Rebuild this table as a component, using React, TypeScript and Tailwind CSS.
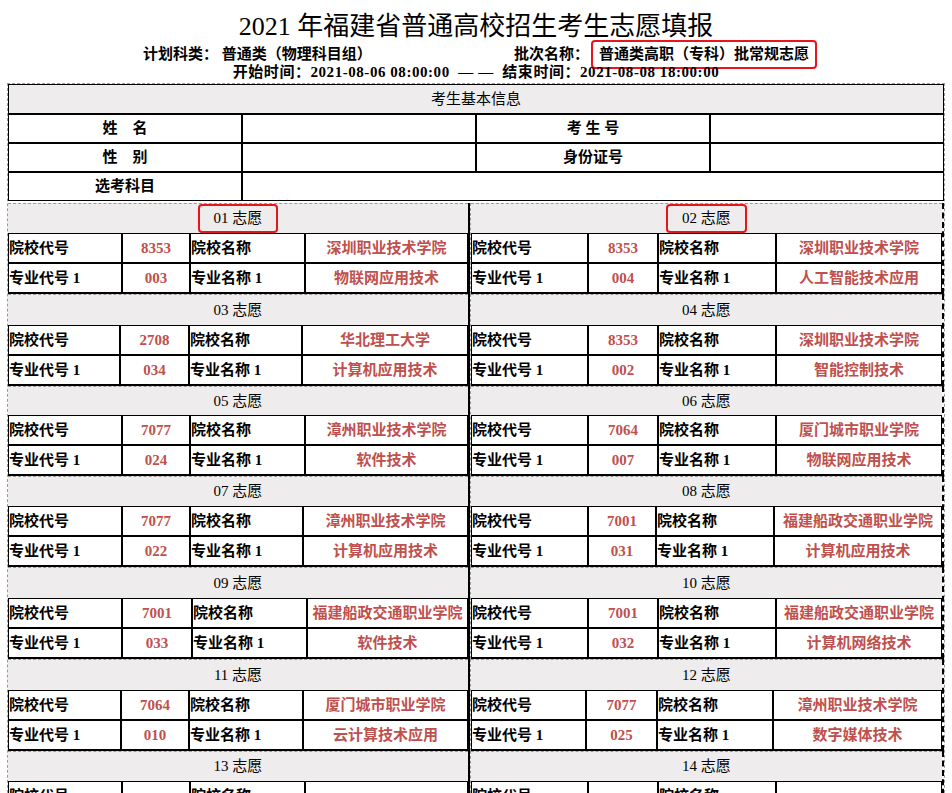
import React from "react";

type V = {
  n: string;
  code?: string;
  school?: string;
  mcode?: string;
  major?: string;
  w?: [number, number, number];
  hl?: boolean;
};

const pairs: { h: string; l: V; r: V }[] = [
  {
    h: "h-[30px]",
    l: { n: "01", code: "8353", school: "深圳职业技术学院", mcode: "003", major: "物联网应用技术", hl: true },
    r: { n: "02", code: "8353", school: "深圳职业技术学院", mcode: "004", major: "人工智能技术应用", hl: true },
  },
  {
    h: "h-[31px]",
    l: { n: "03", code: "2708", school: "华北理工大学", mcode: "034", major: "计算机应用技术", w: [112, 69, 113] },
    r: { n: "04", code: "8353", school: "深圳职业技术学院", mcode: "002", major: "智能控制技术" },
  },
  {
    h: "h-[29px]",
    l: { n: "05", code: "7077", school: "漳州职业技术学院", mcode: "024", major: "软件技术" },
    r: { n: "06", code: "7064", school: "厦门城市职业学院", mcode: "007", major: "物联网应用技术" },
  },
  {
    h: "h-[30px]",
    l: { n: "07", code: "7077", school: "漳州职业技术学院", mcode: "022", major: "计算机应用技术", w: [114, 68, 113] },
    r: { n: "08", code: "7001", school: "福建船政交通职业学院", mcode: "031", major: "计算机应用技术", w: [117, 68, 118] },
  },
  {
    h: "h-[31px]",
    l: { n: "09", code: "7001", school: "福建船政交通职业学院", mcode: "033", major: "软件技术", w: [114, 70, 115] },
    r: { n: "10", code: "7001", school: "福建船政交通职业学院", mcode: "032", major: "计算机网络技术" },
  },
  {
    h: "h-[31px]",
    l: { n: "11", code: "7064", school: "厦门城市职业学院", mcode: "010", major: "云计算技术应用", w: [113, 68, 114] },
    r: { n: "12", code: "7077", school: "漳州职业技术学院", mcode: "025", major: "数字媒体技术", w: [115, 71, 116] },
  },
  {
    h: "h-[30px]",
    l: { n: "13" },
    r: { n: "14" },
  },
];

function Row({ w, a, b, c, d }: { w: [number, number, number]; a: string; b?: string; c: string; d?: string }) {
  return (
    <div className="flex h-[30px]">
      <div className="border border-black flex items-center font-bold text-[15px] shrink-0 whitespace-nowrap" style={{ width: w[0] }}>
        {a}
      </div>
      <div className="border border-black flex items-center justify-center font-bold text-[15px] text-[#c0504d] shrink-0" style={{ width: w[1] }}>
        {b}
      </div>
      <div className="border border-black flex items-center font-bold text-[15px] shrink-0 whitespace-nowrap" style={{ width: w[2] }}>
        {c}
      </div>
      <div className="border border-black flex-1 flex items-center justify-center font-bold text-[15px] text-[#c0504d] whitespace-nowrap">
        {d}
      </div>
    </div>
  );
}

function Block({ v, side, h }: { v: V; side: "l" | "r"; h: string }) {
  const w: [number, number, number] = v.w ?? (side === "l" ? [114, 68, 115] : [117, 70, 118]);
  return (
    <div className="flex flex-col border-b border-black">
      <div className={`${h} flex items-center justify-center bg-[#eeecec] border-t border-dashed border-[#9a9a9a] text-[15px]`}>
        {v.hl ? (
          <span className="h-[29px] px-[14px] flex items-center border-2 border-[#e8151d] rounded-[4px]">
            {v.n} 志愿
          </span>
        ) : (
          <span>{v.n} 志愿</span>
        )}
      </div>
      <Row w={w} a="院校代号" b={v.code} c="院校名称" d={v.school} />
      <Row w={w} a="专业代号 1" b={v.mcode} c="专业名称 1" d={v.major} />
    </div>
  );
}

export default function App() {
  return (
    <div className="w-[952px] bg-white text-black font-['Liberation_Serif','Noto_Sans_CJK_SC',serif] pt-[7px] pb-[40px]">
      <div className="h-[39px] leading-[40px] text-[26px] text-center">2021 年福建省普通高校招生考生志愿填报</div>
      <div className="h-[16px] flex items-center text-[15px] font-bold pl-[143px]">
        <span className="w-[371px] shrink-0 whitespace-nowrap">计划科类：&nbsp;普通类（物理科目组）</span>
        <span className="whitespace-nowrap">批次名称：</span>
        <span className="ml-[2px] h-[29px] px-[6px] flex items-center border-2 border-[#e8151d] rounded-[4px] whitespace-nowrap">
          普通类高职（专科）批常规志愿
        </span>
      </div>
      <div className="h-[20px] flex items-center justify-center text-[15px] font-bold whitespace-nowrap tracking-[0.55px]">
        开始时间：2021-08-06 08:00:00 &nbsp;— —&nbsp; 结束时间：2021-08-08 18:00:00
      </div>

      <div className="mt-[1px] ml-[7px] w-[938px] border border-dashed border-[#9a9a9a]">
        <div className="h-[30px] border border-black bg-[#eeecec] flex items-center justify-center text-[15px]">
          考生基本信息
        </div>
        <div className="flex h-[29px] text-[15px] font-bold">
          <div className="w-[234px] border border-black flex items-center justify-center">姓&nbsp;&nbsp;&nbsp;&nbsp;名</div>
          <div className="w-[234px] border border-black"></div>
          <div className="w-[234px] border border-black flex items-center justify-center">考&nbsp;生&nbsp;号</div>
          <div className="flex-1 border border-black"></div>
        </div>
        <div className="flex h-[29px] text-[15px] font-bold">
          <div className="w-[234px] border border-black flex items-center justify-center">性&nbsp;&nbsp;&nbsp;&nbsp;别</div>
          <div className="w-[234px] border border-black"></div>
          <div className="w-[234px] border border-black flex items-center justify-center">身份证号</div>
          <div className="flex-1 border border-black"></div>
        </div>
        <div className="flex h-[29px] text-[15px] font-bold">
          <div className="w-[234px] border border-black flex items-center justify-center">选考科目</div>
          <div className="flex-1 border border-black"></div>
        </div>

        <div className="mt-[2px] flex flex-col">
          {pairs.map((p) => (
            <div key={p.l.n} className="flex">
              <div className="w-[462px] shrink-0 border-r-2 border-black">
                <Block v={p.l} side="l" h={p.h} />
              </div>
              <div className="flex-1 border-l border-dashed border-l-[#9a9a9a] border-r-2 border-r-black">
                <Block v={p.r} side="r" h={p.h} />
              </div>
            </div>
          ))}
        </div>
      </div>
    </div>
  );
}
